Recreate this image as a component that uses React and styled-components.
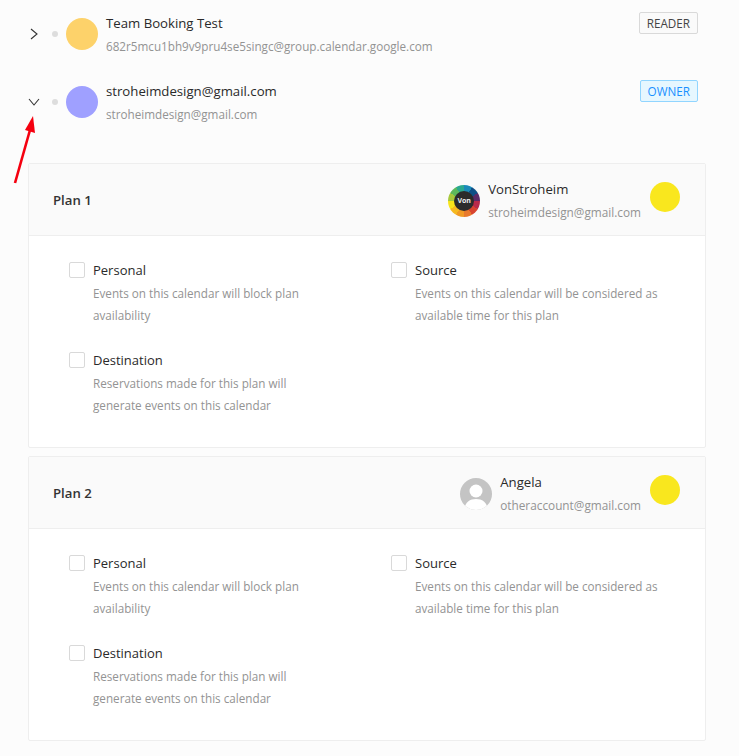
import React from 'react';
import styled, { createGlobalStyle } from 'styled-components';

const Global = createGlobalStyle`
  html, body { margin: 0; padding: 0; background: #fcfcfc; }
  body {
    font-family: "Open Sans", "Noto Sans", "Liberation Sans", sans-serif;
    color: #222;
  }
`;

const Page = styled.div`
  position: relative;
  width: 739px;
  height: 756px;
  overflow: hidden;
  box-sizing: border-box;
  padding: 0 33px 0 28px;
`;

const Row = styled.div`
  display: flex;
  align-items: flex-start;
  height: 68px;
  padding-top: 12px;
  box-sizing: border-box;
`;

const Toggle = styled.div`
  width: 12px;
  height: 44px;
  display: flex;
  align-items: center;
  justify-content: center;
  color: #333;
`;

const Dot = styled.span`
  width: 6px;
  height: 6px;
  margin: 19px 8px 0 12px;
  border-radius: 50%;
  background: #ddd;
  flex: none;
`;

const Swatch = styled.span`
  width: 32px;
  height: 32px;
  margin-top: 6px;
  border-radius: 50%;
  background: ${p => p.color};
  flex: none;
`;

const RowText = styled.div`
  margin-left: 8px;
  flex: 1;
`;

const Title = styled.div`
  font-size: 13.2px;
  line-height: 22px;
  color: #2a2a2a;
`;

const Sub = styled.div`
  font-size: 11.7px;
  line-height: 22px;
  margin-top: 1px;
  color: #939393;
  white-space: nowrap;
`;

const OwnerEmail = styled(Sub)`
  font-size: 11.8px;
`;

const Badge = styled.span`
  margin: 0 8px 0 0;
  height: 22px;
  box-sizing: border-box;
  padding: 0 7px;
  display: flex;
  align-items: center;
  font-size: 11.7px;
  border-radius: 2px;
  border: 1px solid ${p => (p.owner ? '#91d5ff' : '#d9d9d9')};
  background: ${p => (p.owner ? '#e6f7ff' : '#fafafa')};
  color: ${p => (p.owner ? '#1890ff' : '#444')};
`;

const Cards = styled.div`
  display: flex;
  flex-direction: column;
  gap: 8px;
  margin-top: 27px;
`;

const Card = styled.section`
  border: 1px solid #eee;
  border-radius: 2px;
  background: #fff;
`;

const CardHead = styled.header`
  height: 72px;
  box-sizing: border-box;
  display: flex;
  align-items: center;
  padding: 0 25px 0 24px;
  background: #fafafa;
  border-bottom: 1px solid #eee;
`;

const PlanName = styled.h3`
  margin: 0;
  flex: 1;
  font-size: 13.2px;
  font-weight: 600;
  color: #333;
`;

const Avatar = styled.div`
  width: 32px;
  height: 32px;
  border-radius: 50%;
  flex: none;
  margin: 2px 8px 0 0;
  overflow: hidden;
`;

const Wheel = styled(Avatar)`
  display: flex;
  align-items: center;
  justify-content: center;
  background: conic-gradient(
    #1a8ab8 0 30deg, #0f4f86 30deg 60deg, #5b2a68 60deg 90deg, #b92a4a 90deg 120deg,
    #d8442f 120deg 150deg, #e8792c 150deg 180deg, #f09a24 180deg 210deg, #f6b91f 210deg 240deg,
    #f8e41b 240deg 270deg, #a6c83c 270deg 300deg, #5cb85c 300deg 330deg, #2aa88f 330deg 360deg
  );
`;

const WheelHub = styled.span`
  width: 20px;
  height: 20px;
  border-radius: 50%;
  background: #2b2b2b;
  color: #eee;
  font-size: 7px;
  font-weight: 700;
  display: flex;
  align-items: center;
  justify-content: center;
`;

const Owner = styled.div`
  margin-right: 9px;
  margin-top: 2px;
`;

const Color = styled.span`
  width: 30px;
  height: 30px;
  border-radius: 50%;
  background: #f9e71e;
  flex: none;
  margin-top: -5px;
`;

const Options = styled.div`
  display: grid;
  grid-template-columns: 322px 1fr;
  grid-auto-rows: 90px;
  padding: 24px 24px 7px 40px;
`;

const Option = styled.label`
  display: flex;
  align-items: flex-start;
`;

const Box = styled.span`
  width: 16px;
  height: 16px;
  margin: 2px 8px 0 0;
  box-sizing: border-box;
  border: 1px solid #d9d9d9;
  border-radius: 2px;
  background: #fff;
  flex: none;
`;

const OptionName = styled.div`
  font-size: 13px;
  line-height: 20px;
  color: #2a2a2a;
`;

const OptionText = styled.div`
  margin-top: 2px;
`;

const OptionLine = styled.span`
  display: block;
  font-size: 11.7px;
  line-height: 22px;
  color: #939393;
  white-space: nowrap;
`;

const Arrow = styled.svg`
  position: absolute;
  left: 10px;
  top: 112px;
`;

const options = [
  { name: 'Personal', lines: ['Events on this calendar will block plan', 'availability'] },
  { name: 'Source', lines: ['Events on this calendar will be considered as', 'available time for this plan'] },
  { name: 'Destination', lines: ['Reservations made for this plan will', 'generate events on this calendar'] },
];

const ChevronRight = () => (
  <svg width='8' height='12' viewBox='0 0 8 12'>
    <path d='M1 1 L7 6 L1 11' stroke='currentColor' strokeWidth='1.1' fill='none' />
  </svg>
);

const ChevronDown = () => (
  <svg width='12' height='8' viewBox='0 0 12 8'>
    <path d='M1 1 L6 7 L11 1' stroke='currentColor' strokeWidth='1.1' fill='none' />
  </svg>
);

const PersonAvatar = () => (
  <Avatar>
    <svg width='32' height='32' viewBox='0 0 32 32'>
      <rect width='32' height='32' fill='#c4c4c4' />
      <circle cx='16' cy='13' r='6.5' fill='#fff' />
      <path d='M4 32c1-8 6-11 12-11s11 3 12 11z' fill='#fff' />
    </svg>
  </Avatar>
);

const PlanCard = ({ plan, avatar, name, email }) => (
  <Card>
    <CardHead>
      <PlanName>{plan}</PlanName>
      {avatar}
      <Owner>
        <Title>{name}</Title>
        <OwnerEmail>{email}</OwnerEmail>
      </Owner>
      <Color />
    </CardHead>
    <Options>
      {options.map(o => (
        <Option key={o.name}>
          <Box />
          <div>
            <OptionName>{o.name}</OptionName>
            <OptionText>
              {o.lines.map(l => <OptionLine key={l}>{l}</OptionLine>)}
            </OptionText>
          </div>
        </Option>
      ))}
    </Options>
  </Card>
);

export default function App() {
  return (
    <Page>
      <Global />
      <Row>
        <Toggle><ChevronRight /></Toggle>
        <Dot />
        <Swatch color='#fdd26a' />
        <RowText>
          <Title>Team Booking Test</Title>
          <Sub>682r5mcu1bh9v9pru4se5singc@group.calendar.google.com</Sub>
        </RowText>
        <Badge>READER</Badge>
      </Row>
      <Row>
        <Toggle><ChevronDown /></Toggle>
        <Dot />
        <Swatch color='#9fa0ff' />
        <RowText>
          <Title>stroheimdesign@gmail.com</Title>
          <Sub>stroheimdesign@gmail.com</Sub>
        </RowText>
        <Badge owner>OWNER</Badge>
      </Row>
      <Cards>
        <PlanCard
          plan='Plan 1'
          name='VonStroheim'
          email='stroheimdesign@gmail.com'
          avatar={<Wheel><WheelHub>Von</WheelHub></Wheel>}
        />
        <PlanCard
          plan='Plan 2'
          name='Angela'
          email='otheraccount@gmail.com'
          avatar={<PersonAvatar />}
        />
      </Cards>
      <Arrow width='30' height='76' viewBox='0 0 30 76'>
        <path d='M5 71 L20 18' stroke='#f5000f' strokeWidth='2.6' fill='none' />
        <path d='M23 4 L25 21 L15 18 Z' fill='#f5000f' />
      </Arrow>
    </Page>
  );
}
